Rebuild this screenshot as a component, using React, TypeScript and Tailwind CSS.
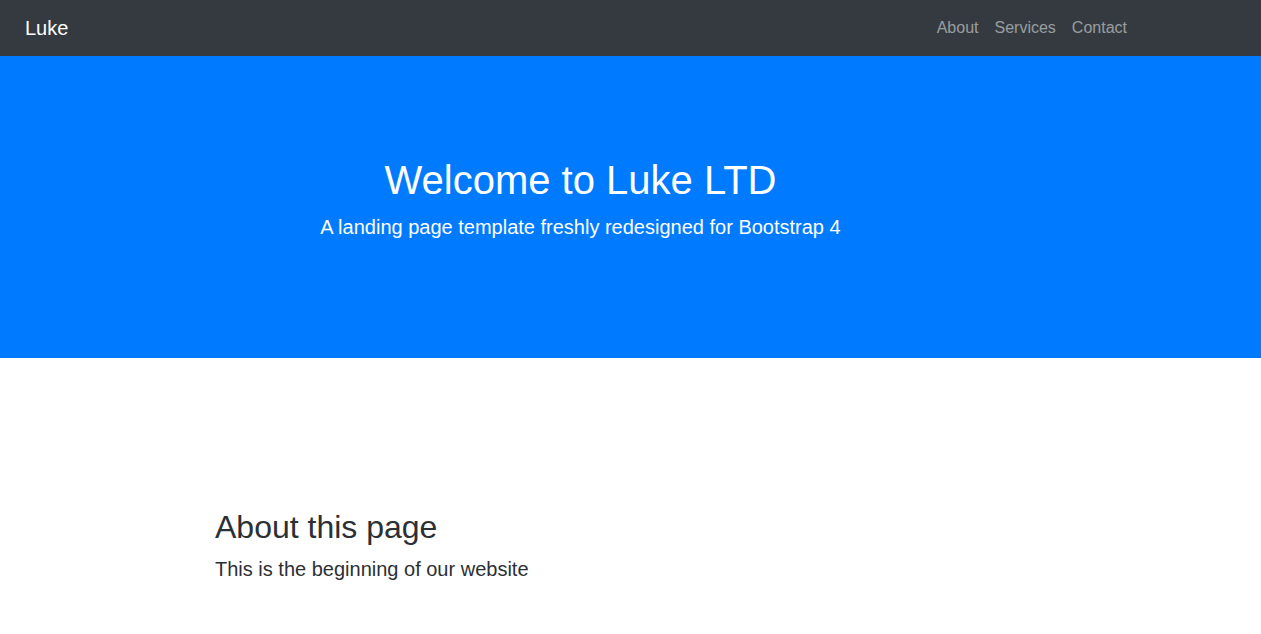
import React from "react";

export default function App() {
  return (
    <div className="min-h-[634px] bg-white font-['Liberation_Sans',Arial,sans-serif] text-[#2b3035]">
      <nav className="flex h-14 items-center justify-between bg-[#343a40] pl-[25px] pr-[134px]">
        <a className="text-[20px] leading-[30px] text-white">Luke</a>
        <ul className="flex items-center gap-4 text-[16px] leading-6 text-white/50">
          <li>About</li>
          <li>Services</li>
          <li>Contact</li>
        </ul>
      </nav>
      <header className="flex flex-col items-center bg-[#007bff] pb-[100px] pr-[100px] pt-[100px] text-white">
        <h1 className="mb-2 text-[40px] font-normal leading-[48px]">Welcome to Luke LTD</h1>
        <p className="mb-4 text-[20px] font-light leading-[30px]">
          A landing page template freshly redesigned for Bootstrap 4
        </p>
      </header>
      <section className="pl-[215px] pt-[150px]">
        <h2 className="mb-2 text-[32px] font-normal leading-[38.4px]">About this page</h2>
        <p className="text-[20px] font-light leading-[30px]">This is the beginning of our website</p>
      </section>
    </div>
  );
}
